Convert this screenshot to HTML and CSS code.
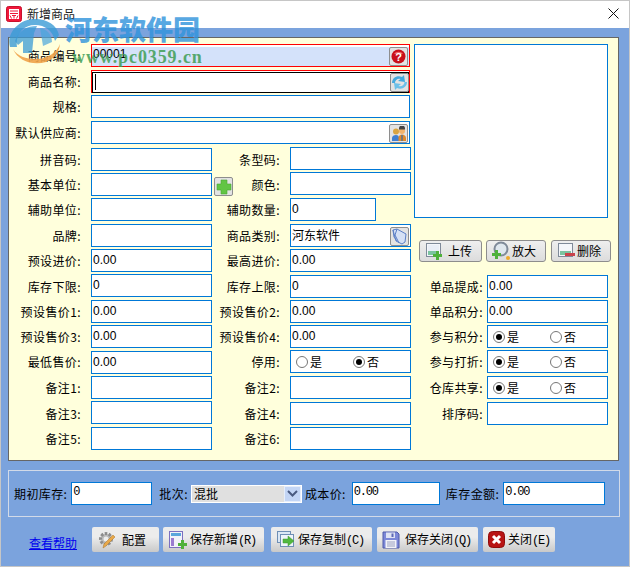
FILE: index.html
```html
<!DOCTYPE html>
<html lang="zh">
<head>
<meta charset="utf-8">
<title>新增商品</title>
<link rel="stylesheet" href="styles.css">
</head>
<body>
<div class="window">
  <header class="titlebar">
    <svg class="app-icon" width="16" height="16" viewBox="0 0 16 16"><rect x=".5" y=".5" width="15" height="15" rx="2" fill="#f0173a" stroke="#c9102c"/><rect x="3" y="3" width="10" height="10" fill="#fff"/><path d="M4 5h8M4 7.500h8M4 9.500l1.500 3M8 9v3.500M12 9.500l-1.500 3M6 9.500H10" stroke="#f0173a" fill="none"/></svg>
    <span class="title">新增商品</span>
    <svg class="close" width="11" height="11" viewBox="0 0 11 11"><path d="M.5.5l10 10M10.500.5l-10 10" stroke="#111" fill="none"/></svg>
  </header>

  <main class="client">
    <section class="panel">
      <div class="form">
        <label class="lb1">商品编号:</label>
        <div class="box span3 box-id">00001
          <span class="mini"><svg width="15" height="15" viewBox="0 0 15 15"><circle cx="7.500" cy="7.500" r="7" fill="#c9101b"/><path d="M3 5a5 4 0 0 1 9 0" fill="#ef6a6a"/><text x="7.500" y="12" class="qm">?</text></svg></span>
        </div>
        <div class="photo"></div>

        <label class="lb1">商品名称:</label>
        <div class="box span3 box-name"><div class="name-inner"><i class="caret"></i></div>
          <span class="mini mini-r"><svg width="17" height="17" viewBox="0 0 17 17"><path d="M1 9C1 4 6 1 11 3l2-2 1 7-7-1 2.500-2C7 4 4 6 4 9z" fill="#45a9dd"/><path d="M16 8c0 5-5 8-10 6l-2 2-1-7 7 1-2.500 2c3 1 6-1 6-4z" fill="#6cc0e8"/></svg></span>
        </div>

        <label class="lb1">规格:</label>
        <div class="box span3"></div>

        <label class="lb1">默认供应商:</label>
        <div class="box span3">
          <span class="mini"><svg width="16" height="16" viewBox="0 0 16 16"><circle cx="5" cy="5.500" r="3" fill="#d9a441"/><path d="M1 15v-3c0-2 2-3 4-3s3 1 3 3v3z" fill="#3f7fd0"/><circle cx="11" cy="5" r="3" fill="#f2b36b"/><path d="M8 2.500a3 3 0 0 1 6 0v1H8z" fill="#444"/><path d="M7.500 15v-3c0-2 1.500-3.500 3.500-3.500s4 1.500 4 3.500v3z" fill="#e08a2c"/><path d="M10 9h2v6h-2z" fill="#777"/></svg></span>
        </div>

        <label class="lb1">拼音码:</label>
        <div class="box"></div>
        <label class="lb2">条型码:</label>
        <div class="box up"></div>

        <label class="lb1">基本单位:</label>
        <div class="box"></div>
        <label class="lb2 with-add">
          <span class="mini add"><svg width="16" height="16" viewBox="0 0 16 16"><path d="M5 1h6v4h4v6h-4v4H5v-4H1V5h4z" fill="#62c544" stroke="#4aa832" stroke-width=".6"/></svg></span>
          <span>颜色:</span>
        </label>
        <div class="box up"></div>

        <label class="lb1">辅助单位:</label>
        <div class="box"></div>
        <label class="lb2">辅助数量:</label>
        <div class="box narrow">0</div>

        <label class="lb1">品牌:</label>
        <div class="box"></div>
        <label class="lb2">商品类别:</label>
        <div class="box cjk">河东软件
          <span class="mini"><svg width="17" height="17" viewBox="0 0 17 17"><path d="M2 2l4-1 9 5-1 8-3 2-6-3z" fill="#d5e0f5" stroke="#5b7fc6"/><path d="M6 1L4 7l4 8M2 2l1 7 3 4" fill="none" stroke="#5b7fc6"/></svg></span>
        </div>
        <div class="photo-btns">
          <button class="tool tool-up"><svg width="20" height="19" viewBox="0 0 20 19"><rect x="1.500" y="1.500" width="14" height="13" fill="#f4f6fa" stroke="#7f8a99"/><rect x="3" y="9" width="11" height="4" fill="#7cc4a0"/><rect x="3" y="3" width="11" height="6" fill="#e9eef6"/><path d="M11 9h3v3h3v3h-3v3h-3v-3H8v-3h3z" fill="#4fb13b"/></svg><span>上传</span></button>
          <button class="tool tool-zoom"><svg width="20" height="20" viewBox="0 0 20 20"><circle cx="10" cy="8" r="6.500" fill="#dfe7ee" stroke="#7f8a99" stroke-width="2"/><circle cx="17" cy="17" r="2" fill="#f0a92b"/><path d="M4 9h3v3h3v3H7v3H4v-3H1v-3h3z" fill="#4fb13b"/></svg><span>放大</span></button>
          <button class="tool tool-del"><svg width="20" height="19" viewBox="0 0 20 19"><rect x="1.500" y="1.500" width="14" height="13" fill="#f4f6fa" stroke="#7f8a99"/><rect x="3" y="9" width="11" height="4" fill="#7cc4a0"/><rect x="8" y="11" width="10" height="3" fill="#c9434b"/></svg><span>删除</span></button>
        </div>

        <label class="lb1">预设进价:</label>
        <div class="box">0.00</div>
        <label class="lb2">最高进价:</label>
        <div class="box">0.00</div>

        <label class="lb1">库存下限:</label>
        <div class="box up">0</div>
        <label class="lb2">库存上限:</label>
        <div class="box">0</div>
        <div class="sp"></div>
        <label class="lb3">单品提成:</label>
        <div class="box">0.00</div>

        <label class="lb1">预设售价1:</label>
        <div class="box">0.00</div>
        <label class="lb2">预设售价2:</label>
        <div class="box">0.00</div>
        <div class="sp"></div>
        <label class="lb3">单品积分:</label>
        <div class="box">0.00</div>

        <label class="lb1">预设售价3:</label>
        <div class="box">0.00</div>
        <label class="lb2">预设售价4:</label>
        <div class="box">0.00</div>
        <div class="sp"></div>
        <label class="lb3">参与积分:</label>
        <div class="box radios"><span class="opt"><i class="radio on"></i>是</span><span class="opt"><i class="radio"></i>否</span></div>

        <label class="lb1">最低售价:</label>
        <div class="box down">0.00</div>
        <label class="lb2">停用:</label>
        <div class="box radios"><span class="opt"><i class="radio"></i>是</span><span class="opt"><i class="radio on"></i>否</span></div>
        <div class="sp"></div>
        <label class="lb3">参与打折:</label>
        <div class="box radios"><span class="opt"><i class="radio on"></i>是</span><span class="opt"><i class="radio"></i>否</span></div>

        <label class="lb1">备注1:</label>
        <div class="box"></div>
        <label class="lb2">备注2:</label>
        <div class="box"></div>
        <div class="sp"></div>
        <label class="lb3">仓库共享:</label>
        <div class="box radios"><span class="opt"><i class="radio on"></i>是</span><span class="opt"><i class="radio"></i>否</span></div>

        <label class="lb1">备注3:</label>
        <div class="box up"></div>
        <label class="lb2">备注4:</label>
        <div class="box"></div>
        <div class="sp"></div>
        <label class="lb3">排序码:</label>
        <div class="box"></div>

        <label class="lb1">备注5:</label>
        <div class="box"></div>
        <label class="lb2">备注6:</label>
        <div class="box"></div>
      </div>
    </section>

    <section class="stock">
      <label>期初库存:</label>
      <div class="box mono s-qty">0</div>
      <label class="s-batch">批次:</label>
      <div class="select"><span class="sel-val">混批</span><span class="sel-btn"><svg width="11" height="7" viewBox="0 0 11 7"><path d="M1 1l4.500 4.500L10 1" fill="none" stroke="#4a5a80" stroke-width="2"/></svg></span></div>
      <label class="s-cost">成本价:</label>
      <div class="box mono s-cost-in">0.00</div>
      <label class="s-amt">库存金额:</label>
      <div class="box mono s-amt-in">0.00</div>
    </section>

    <footer class="actions">
      <a class="help" href="#">查看帮助</a>
      <button class="act a-cfg"><svg width="20" height="20" viewBox="0 0 20 20"><circle cx="9" cy="9" r="5.500" fill="#b9b9b9" stroke="#8d8d8d" stroke-width="3" stroke-dasharray="2.500 1.500"/><circle cx="9" cy="9" r="2.500" fill="#eee"/><path d="M6 18l1-4 9-9 2 2-9 9z" fill="#e9a94a" stroke="#a8742a" stroke-width=".5"/></svg><span>配置</span></button>
      <button class="act a-new"><svg width="20" height="20" viewBox="0 0 20 20"><rect x="1.500" y="1.500" width="13" height="16" fill="#f2f2f8" stroke="#7b6fc0"/><rect x="3" y="3" width="10" height="3" fill="#5aa6dc"/><rect x="3" y="8" width="3" height="8" fill="#9a7bd0"/><path d="M13 10h3v3h3v3h-3v3h-3v-3h-3v-3h3z" fill="#4fb13b"/></svg><span>保存新增<span class="mono-k">(R)</span></span></button>
      <button class="act a-copy"><svg width="20" height="20" viewBox="0 0 20 20"><rect x="1.500" y="1.500" width="13" height="11" fill="#dce8f5" stroke="#6f8fb5"/><rect x="4.500" y="4.500" width="13" height="12" fill="#eef4fa" stroke="#6f8fb5"/><path d="M7 9h5V6l6 5-6 5v-3H7z" fill="#52b83f" stroke="#3f9a2e" stroke-width=".5"/></svg><span>保存复制<span class="mono-k">(C)</span></span></button>
      <button class="act a-save"><svg width="18" height="18" viewBox="0 0 18 18"><path d="M1 1h14l2 2v14H1z" fill="#7c88d8" stroke="#4e5aa8"/><rect x="4" y="1.500" width="9" height="5.500" fill="#dfe3f3"/><rect x="9.500" y="2.500" width="2" height="3.500" fill="#5b67b5"/><rect x="3.500" y="9" width="11" height="8" fill="#f2f3f8"/><path d="M5 11h8M5 13h8M5 15h8" stroke="#9aa0c0"/></svg><span>保存关闭<span class="mono-k">(Q)</span></span></button>
      <button class="act a-close"><svg width="17" height="17" viewBox="0 0 17 17"><rect x=".5" y=".5" width="16" height="16" rx="4" fill="#b81414" stroke="#8d0d0d"/><path d="M5 5l7 7M12 5l-7 7" stroke="#fff" stroke-width="3"/></svg><span>关闭<span class="mono-k">(E)</span></span></button>
    </footer>
  </main>

  <div class="watermark">
    <svg class="wm-logo" width="54" height="50" viewBox="0 0 54 50"><path d="M3 30C-1 16 12 2 28 2c12 0 22 6 24 16l-4 6C46 14 38 8 28 8 16 8 8 18 10 30z" fill="#3b9bd6" opacity=".8"/><path d="M8 24C12 13 20 9 30 9l-3 7-2 20H16V24l-5 4z" fill="#3b9bd6" opacity=".75"/><path d="M33 11c7 1 12 7 12 14l-9 4z" fill="#4aa5dc" opacity=".7"/><path d="M6 32c5 12 20 17 33 13 8-3 13-9 14-18-3 8-12 15-24 15C19 42 10 39 6 32z" fill="#f0a34a" opacity=".9"/></svg>
    <span class="wm-cn">河东软件园</span>
    <span class="wm-url">www.pc0359.cn</span>
  </div>
</div>
</body>
</html>
```
FILE: styles.css
```css
* { box-sizing: border-box; }
html, body { margin: 0; padding: 0; }
body {
  font: 12px/16px "Noto Sans CJK SC", "Liberation Sans", sans-serif;
  color: #000;
}
.window {
  position: relative;
  width: 630px;
  height: 567px;
  border: 1px solid #c6c6c6;
  overflow: hidden;
  background: #7ba3dd;
}
.titlebar {
  display: flex;
  align-items: center;
  height: 27px;
  background: #fff;
  padding: 0 10px 2px 5px;
}
.title { margin-left: 5px; color: #222; }
.close { margin-left: auto; }

.client { padding: 9px 10px 0 7px; }

.panel {
  width: 611px;
  height: 424px;
  background: #ffffdc;
  border: 1px solid #666;
  padding: 6px 0 0;
}
.form {
  display: grid;
  grid-template-columns: 82px 121px 78px 121px 3px 73px 121px;
  grid-template-rows: 26px 25px 26px 27px 25px 25px 26px 25px 26px 25px 25px 25px 26px 26px 25px 23px;
  align-items: start;
}
label { display: block; white-space: nowrap; letter-spacing: .4px; }
.lb1, .lb2, .lb3 {
  text-align: right;
  line-height: 23px;
  height: 23px;
}
.lb1 { grid-column: 1; padding-right: 10px; }
.lb2 { grid-column: 3; padding-right: 10px; }
.lb3 { grid-column: 6; padding-right: 4px; }
.with-add { display: flex; justify-content: space-between; align-items: flex-end; padding-left: 2px; }

.box {
  position: relative;
  height: 23px;
  border: 1px solid #0078d7;
  background: #fff;
  padding: 2px 0 0 1px;
  font-family: "Liberation Sans", "Noto Sans CJK SC", sans-serif;
  line-height: 16px;
}
.cjk { font-family: "Noto Sans CJK SC", sans-serif; }
.span3 { grid-column: 2 / 5; margin-right: 1px; }
.narrow { width: 86px; }
.up { margin-top: -1px; }
.down { margin-top: 1px; }

.box-id {
  border-color: #f00;
  background: linear-gradient(#fff 2px, #d4e2fa 2px);
  padding-top: 1px;
}
.box-name {
  border-color: #f00;
  border-bottom: 0;
  padding: 1px 0 0;
}
.name-inner {
  height: 21px;
  border: 1px solid #000;
  padding: 1px 2px;
}
.caret { display: block; width: 1px; height: 16px; background: #000; }

.mini {
  position: absolute;
  top: 2px;
  right: 1px;
  width: 19px;
  height: 19px;
  border: 1px solid #8e8e8e;
  border-radius: 2px;
  background: #e3e3e3;
  display: flex;
  align-items: center;
  justify-content: center;
}
.mini-r { right: 0; top: 2px; }
.mini.add { position: static; }
.qm { font: bold 11px "Liberation Sans", sans-serif; fill: #fff; text-anchor: middle; }

.photo {
  grid-column: 6 / 8;
  grid-row: 1 / 8;
  height: 174px;
  border: 1px solid #0078d7;
  background: #fff;
}
.sp { grid-column: 5; }

.photo-btns {
  grid-column: 6 / 8;
  grid-row: 8 / 10;
  display: flex;
  margin: 16px -3px 0 5px;
  gap: 4px;
}
button {
  font: inherit;
  color: #000;
  padding: 0;
  display: flex;
  align-items: center;
}
.tool {
  height: 22px;
  border: 1px solid #8d8d8d;
  border-radius: 3px;
  background: linear-gradient(#efefef, #dcdcdc);
}
.tool-up { width: 63px; padding-left: 5px; gap: 3px; }
.tool-zoom { width: 60px; padding-left: 4px; gap: 1px; }
.tool-del { width: 60px; margin-left: 1px; padding-left: 5px; gap: 0; }

.radios {
  display: flex;
  padding: 0 0 0 5px;
  align-items: center;
  font-family: "Noto Sans CJK SC", sans-serif;
}
.opt { display: flex; align-items: center; width: 58px; gap: 2px; }
.radio {
  position: relative;
  display: block;
  width: 12px;
  height: 12px;
  border: 1px solid #777;
  border-radius: 50%;
  background: #fff;
}
.radio.on::after {
  content: "";
  position: absolute;
  left: 2px;
  top: 2px;
  width: 6px;
  height: 6px;
  border-radius: 50%;
  background: #000;
}

.stock {
  display: flex;
  align-items: center;
  width: 612px;
  height: 47px;
  margin-top: 9px;
  border: 1px solid #d2dae8;
  padding: 0 0 0 5px;
}
.mono {
  font: 12px/16px "Liberation Mono", monospace;
  letter-spacing: -1.2px;
  height: 23px;
  padding: 1px 0 0 1px;
}
.s-qty { width: 81px; margin-left: 4px; }
.s-batch { margin-left: 7px; }
.select {
  display: flex;
  width: 111px;
  height: 18px;
  margin-left: 3px;
  border: 1px solid #fff;
  background: #e0e0e0;
}
.sel-val { flex: 1; padding-left: 2px; line-height: 16px; }
.sel-btn {
  width: 17px;
  background: #c3d5f5;
  border: 1px solid #e6eefc;
  display: flex;
  align-items: center;
  justify-content: center;
}
.s-cost { margin-left: 3px; }
.s-cost-in { width: 88px; margin-left: 6px; }
.s-amt { margin-left: 6px; }
.s-amt-in { width: 102px; margin-left: 4px; }

.actions {
  display: flex;
  align-items: flex-start;
  margin-top: 10px;
  height: 25px;
}
.help {
  margin: 8px 15px 0 21px;
  color: #0000ee;
  text-decoration: underline;
  white-space: nowrap;
}
.act {
  height: 25px;
  border: 0;
  border-radius: 2px;
  background: linear-gradient(#ececec, #ececec 40%, #c9c9c9);
  padding-left: 5px;
  white-space: nowrap;
  margin-right: 5px;
}
.a-cfg { width: 67px; margin-right: 4px; gap: 5px; }
.a-new { width: 101px; margin-right: 7px; gap: 2px; }
.a-copy { width: 101px; gap: 2px; }
.a-save { width: 101px; gap: 5px; }
.a-close { width: 72px; gap: 3px; }
.mono-k { font: 12px "Liberation Mono", monospace; letter-spacing: -1.2px; }

.watermark { position: absolute; inset: 0; pointer-events: none; }
.wm-logo { position: absolute; left: 6px; top: 16px; }
.wm-cn {
  position: absolute;
  left: 64px;
  top: 11px;
  font: 900 27px/34px "Noto Sans CJK SC", sans-serif;
  color: #2f93dc;
  opacity: .8;
  white-space: nowrap;
}
.wm-url {
  position: absolute;
  left: 71px;
  top: 46px;
  font: bold 18px/20px "Liberation Serif", serif;
  letter-spacing: .9px;
  color: #3f9e55;
  opacity: .85;
  white-space: nowrap;
}
```
